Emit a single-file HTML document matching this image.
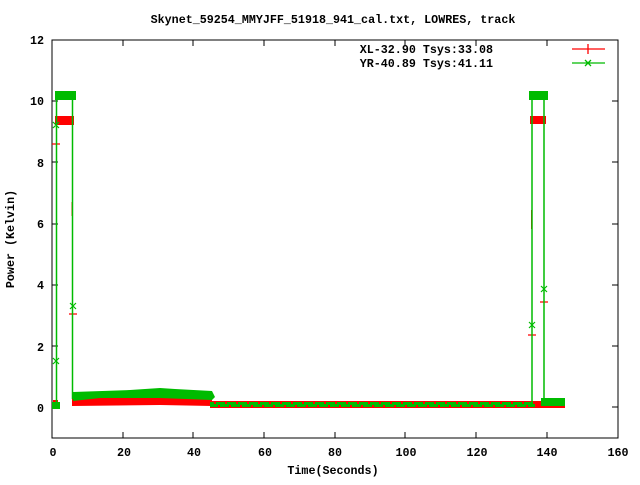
<!DOCTYPE html>
<html><head><style>
body{margin:0;background:#fff;width:640px;height:480px;overflow:hidden}
svg text{font-family:"Liberation Mono",monospace;font-weight:bold;font-size:11.7px;fill:#000}
</style></head><body>
<svg width="640" height="480" viewBox="0 0 640 480" xmlns="http://www.w3.org/2000/svg">
<text x="333" y="23" text-anchor="middle">Skynet_59254_MMYJFF_51918_941_cal.txt, LOWRES, track</text>
<g text-anchor="end">
<text x="44" y="44">12</text><text x="44" y="105">10</text><text x="44" y="167">8</text>
<text x="44" y="228">6</text><text x="44" y="289">4</text><text x="44" y="351">2</text><text x="44" y="412">0</text>
</g>
<g text-anchor="middle">
<text x="53" y="456">0</text><text x="124" y="456">20</text><text x="194" y="456">40</text><text x="265" y="456">60</text>
<text x="335" y="456">80</text><text x="406" y="456">100</text><text x="477" y="456">120</text><text x="547" y="456">140</text><text x="618" y="456">160</text>
<text x="333" y="474">Time(Seconds)</text>
</g>
<text transform="translate(14,239) rotate(-90)" text-anchor="middle">Power (Kelvin)</text>
<g stroke="#000" stroke-width="1">
<path d="M52,40 V438 H618 V40 Z" fill="none"/>
<path d="M52,40h6M52,101h6M52,162h6M52,224h6M52,285h6M52,346h6M52,407h6M618,101h-6M618,162h-6M618,224h-6M618,285h-6M618,346h-6M618,407h-6"/>
<path d="M123,438v-6M193,438v-6M264,438v-6M335,438v-6M405,438v-6M476,438v-6M547,438v-6M123,40v6M193,40v6M264,40v6M335,40v6M405,40v6M476,40v6M547,40v6"/>
</g>
<text x="493" y="53" text-anchor="end">XL-32.90 Tsys:33.08</text>
<text x="493" y="67" text-anchor="end">YR-40.89 Tsys:41.11</text>
<path d="M572,49h33M588,44v10" stroke="#f00" stroke-width="1.3"/>
<path d="M572,63h33M585,60l6,6M585,66l6,-6" stroke="#0b0" stroke-width="1.3"/>
<!-- red data -->
<g fill="#f00">
<rect x="55" y="116" width="19" height="9"/>
<rect x="530" y="116" width="16" height="8"/>
<rect x="53" y="400" width="5" height="8"/>
<path d="M72,398 L160,395 L212,399 L212,406 L160,405 L72,406Z"/>
<rect x="210" y="401" width="355" height="7"/>
<rect x="71.5" y="202" width="1.5" height="14"/>
<rect x="531" y="210" width="1.5" height="19"/>
</g>
<g stroke="#f00" stroke-width="1.3">
<path d="M52,144h8M69,314h8M528,335h8M540,302h8"/>
</g>
<!-- green data -->
<g fill="#0b0">
<rect x="55" y="91" width="21" height="9"/>
<rect x="529" y="91" width="19" height="9"/>
<path d="M73,392 L130,390 L160,388 L175,389 L212,391 L215,397 L212,400 L160,398 L100,398 L73,401Z"/>
<rect x="52" y="402" width="8" height="7"/>
<path d="M210,402 H535 V407 H210Z"/>
<rect x="541" y="398" width="24" height="8"/>
</g>
<g stroke="#f00" stroke-width="2" stroke-dasharray="2 9">
<path d="M214,403H535M218,406H535"/>
</g>
<g stroke="#0b0" stroke-width="1.5" fill="none">
<path d="M56.5,406 V96 M72.5,96 V399 M532,406 V96 M544,96 V403"/>
</g>
<g stroke="#0b0" stroke-width="1.2">
<path d="M53,358l6,6M53,364l6,-6M53,122l6,6M53,128l6,-6M70,303l6,6M70,309l6,-6M529,322l6,6M529,328l6,-6M541,286l6,6M541,292l6,-6"/>
</g>
</svg>
</body></html>
